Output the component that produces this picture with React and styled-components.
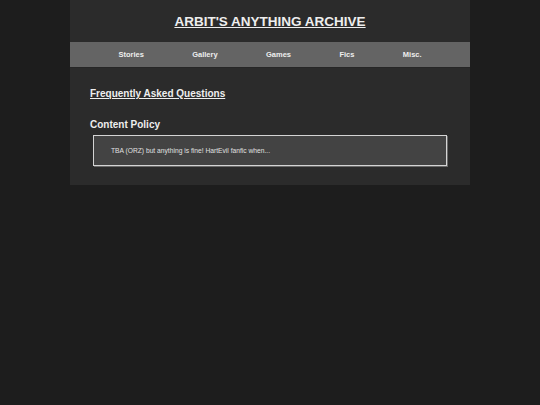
import React from "react";
import styled, { createGlobalStyle } from "styled-components";

const links = ["Stories", "Gallery", "Games", "Fics", "Misc."];

export default function App() {
	return (
		<>
			<GlobalStyle />
			<Page>
				<Header>
					<Title href="#">ARBIT'S ANYTHING ARCHIVE</Title>
				</Header>
				<Nav>
					{links.map((l) => (
						<NavLink key={l} href="#">
							{l}
						</NavLink>
					))}
				</Nav>
				<Main>
					<SectionLink href="#">Frequently Asked Questions</SectionLink>
					<SectionTitle>Content Policy</SectionTitle>
					<PolicyBox>TBA (ORZ) but anything is fine! HartEvil fanfic when...</PolicyBox>
				</Main>
			</Page>
		</>
	);
}

const GlobalStyle = createGlobalStyle`
	html, body {
		margin: 0;
		padding: 0;
		background-color: #1d1d1d;
		font-family: "Liberation Sans", Arial, sans-serif;
		color: #eeeeee;
	}
`;

const Page = styled.div`
	width: 400px;
	margin: 0 auto;
	background-color: #2b2b2b;
	display: flex;
	flex-direction: column;
`;

const Header = styled.header`
	height: 41px;
	padding-top: 1px;
	display: flex;
	align-items: center;
	justify-content: center;
`;

const Title = styled.a`
	font-size: 13.5px;
	font-weight: bold;
	color: #eeeeee;
	text-decoration: underline;
	line-height: 1.15;
`;

const Nav = styled.nav`
	height: 25px;
	background-color: #646464;
	border-bottom: 1px solid #262626;
	display: flex;
	align-items: center;
	justify-content: space-evenly;
`;

const NavLink = styled.a`
	font-size: 7.5px;
	font-weight: bold;
	color: #eeeeee;
	text-decoration: none;
`;

const Main = styled.main`
	padding: 20px 20px 19px;
	display: flex;
	flex-direction: column;
	align-items: flex-start;
`;

const SectionLink = styled.a`
	font-size: 10px;
	font-weight: bold;
	line-height: 1.15;
	color: #eeeeee;
	text-decoration: underline;
`;

const SectionTitle = styled.h3`
	margin: 19.5px 0 4.5px;
	font-size: 10px;
	font-weight: bold;
	line-height: 1.15;
	color: #eeeeee;
`;

const PolicyBox = styled.div`
	align-self: stretch;
	margin: 0 3px;
	box-sizing: border-box;
	height: 31px;
	padding: 0 17px;
	display: flex;
	align-items: center;
	background-color: #434343;
	border: 1px solid #d4d4d4;
	box-shadow: 1px 1px 0 #6a6a6a;
	font-size: 6.7px;
	color: #e0e0e0;
`;
